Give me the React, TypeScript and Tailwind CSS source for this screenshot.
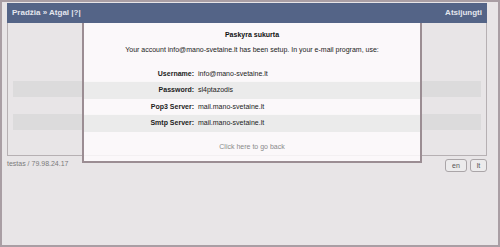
import React from "react";

const rows = [
  { label: "Username:", value: "info@mano-svetaine.lt", striped: false },
  { label: "Password:", value: "sl4ptazodis", striped: true },
  { label: "Pop3 Server:", value: "mail.mano-svetaine.lt", striped: false },
  { label: "Smtp Server:", value: "mail.mano-svetaine.lt", striped: true },
];

export default function App() {
  return (
    <div
      className="relative w-[500px] h-[247px] overflow-hidden border-2 border-[#a99ea4] bg-[#e8e5e7] text-[#222]"
      style={{ fontFamily: '"Liberation Sans", Arial, sans-serif' }}
    >
      <div className="ml-[5px] mt-px w-[480px]">
        {/* header */}
        <div className="flex h-[20px] items-center justify-between bg-[#546487] px-[5px] text-[8px] font-bold text-[#e4e6ee]">
          <span>Pradžia » Atgal |?|</span>
          <span>Atsijungti</span>
        </div>
        {/* panel */}
        <div className="h-[133px] border border-t-0 border-[#b6b0b3] px-[5px] pt-[41px]">
          {rows.map((r) => (
            <div
              key={r.label}
              className={`h-[16.5px] ${r.striped ? "bg-[#dcdbdc]" : ""}`}
            />
          ))}
        </div>
        {/* footer */}
        <div className="mt-[3px] flex items-start justify-between">
          <span className="text-[7px] leading-[10px] text-[#7a7a7a]">
            testas / 79.98.24.17
          </span>
          <div className="flex gap-[3px]">
            <button className="h-[13px] w-[22px] rounded-[3px] border border-[#aaa5a8] bg-[#ecebec] text-[7px] leading-none text-[#555]">
              en
            </button>
            <button className="h-[13px] w-[17px] rounded-[3px] border border-[#aaa5a8] bg-[#ecebec] text-[7px] leading-none text-[#555]">
              lt
            </button>
          </div>
        </div>
      </div>

      {/* modal overlay */}
      <div className="absolute left-[80px] top-[21px] flex h-[140px] w-[340px] flex-col border-2 border-t-0 border-[#9b8d93] bg-[#fefcfd]/85">
        <div className="mt-[7px] text-center text-[7px] font-bold leading-[9px] text-[#111]">
          Paskyra sukurta
        </div>
        <div className="mt-[6px] text-center text-[7px] leading-[9px] text-[#222]">
          Your account info@mano-svetaine.lt has been setup. In your e-mail
          program, use:
        </div>
        <div className="mt-[11.5px]">
          {rows.map((r) => (
            <div
              key={r.label}
              className={`flex h-[16.5px] items-center text-[7px] ${
                r.striped ? "bg-[#ebebeb]" : ""
              }`}
            >
              <span className="w-[110px] text-right font-bold text-[#222]">
                {r.label}
              </span>
              <span className="ml-[4px] text-[#222]">{r.value}</span>
            </div>
          ))}
        </div>
        <div className="mt-[10px] text-center text-[7px] leading-[9px] text-[#8a8a8a]">
          Click here to go back
        </div>
      </div>
    </div>
  );
}
